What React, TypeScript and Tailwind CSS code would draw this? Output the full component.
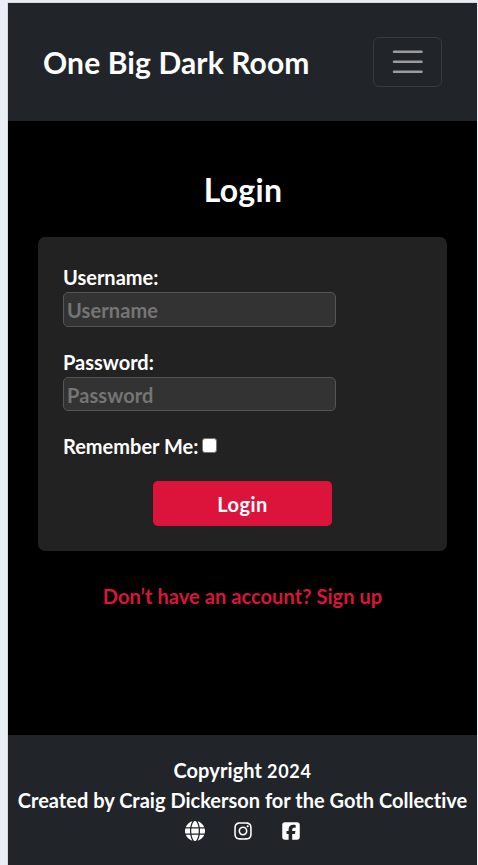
import { FaGlobe, FaInstagram, FaSquareFacebook } from "react-icons/fa6";

function Field({ label, type, size }: { label: string; type: string; size: string }) {
  return (
    <div className={size}>
      <label className="block h-[30px] leading-[30px]">
        {label}:
      </label>
      <input
        type={type}
        placeholder={label}
        className="block min-h-0 w-[273px] flex-1 rounded-[5px] border border-[#555] bg-[#333] px-[3px] pt-px pb-0 font-bold tracking-[0.1px] text-white outline-none placeholder:text-[#757575]"
      />
    </div>
  );
}

export default function App() {
  return (
    <div className="h-[865px] w-[478px] bg-[#e8edf6] pt-[2px] pr-px pl-[7px] font-['Lato','Open_Sans',sans-serif] text-[20px] leading-[30px] font-bold text-white [font-variant-ligatures:none]">
      <div className="flex h-full flex-col border-t border-l border-[#d5d9e0] bg-black">
        <header className="flex h-[118px] shrink-0 items-center justify-between bg-[#212529] pr-[35px] pl-[35px]">
          <h1 className="pt-px text-[30px] leading-[45px] tracking-[0.12px] whitespace-nowrap">One Big Dark Room</h1>
          <button className="flex h-[50px] w-[69px] items-center justify-center rounded-[6px] border border-[#373b3e]">
            <svg viewBox="0 0 30 30" className="mr-[0.5px] h-[37.5px] w-[37.5px]" fill="none">
              <path
                stroke="rgba(255,255,255,0.55)"
                strokeLinecap="round"
                strokeMiterlimit="10"
                strokeWidth="2"
                d="M4 7h22M4 15h22M4 23h22"
              />
            </svg>
          </button>
        </header>
        <main className="flex flex-1 flex-col items-center">
          <h2 className="mt-[49px] h-[67px] pl-px text-[32px] leading-[40px] tracking-[0.3px]">Login</h2>
          <form className="h-[314px] w-[409px] rounded-[7px] bg-[#222] px-[25px] pt-[25px]">
            <Field label="Username" type="text" size="mb-[20px] flex h-[65px] flex-col" />
            <Field label="Password" type="password" size="mb-[21px] flex h-[64px] flex-col" />
            <div className="flex h-[30px] items-center">
              <label className="-mt-[2px]">Remember Me:</label>
              <span className="mb-[3px] ml-[4px] h-[15px] w-[15px] rounded-[3px] border border-[#767676] bg-white" />
            </div>
            <button
              type="button"
              className="mt-[19px] ml-[90px] block h-[45px] w-[179px] rounded-[5px] bg-[#dc143c] pt-px tracking-[0.5px]"
            >
              Login
            </button>
          </form>
          <a className="mt-[30px] tracking-[0.07px] whitespace-nowrap text-[#dc143c]">Don’t have an account? Sign up</a>
        </main>
        <footer className="flex h-[130px] shrink-0 flex-col items-center bg-[#212529] pt-[20px]">
          <p className="h-[30px] tracking-[0.1px]">
            Copyright <span className="text-[18px] leading-none tracking-[0.7px]">2024</span>
          </p>
          <p className="h-[30px] tracking-[0.01px] whitespace-nowrap">Created by Craig Dickerson for the Goth Collective</p>
          <div className="flex h-[32px] items-center gap-[28px] pl-px">
            <FaGlobe className="h-5 w-5" />
            <FaInstagram className="h-5 w-5" />
            <FaSquareFacebook className="h-5 w-5" />
          </div>
        </footer>
      </div>
    </div>
  );
}
